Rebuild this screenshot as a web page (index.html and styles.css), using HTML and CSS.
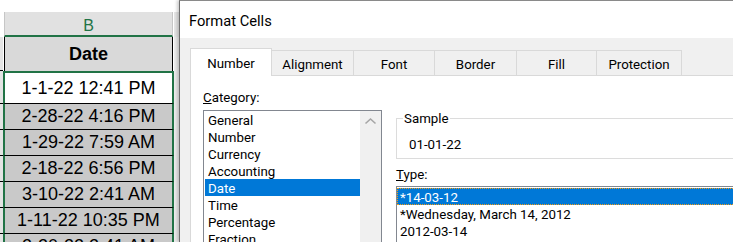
FILE: index.html
```html
<!DOCTYPE html>
<html lang="en">

<head>
    <meta charset="UTF-8">
    <meta name="viewport" content="width=device-width, initial-scale=1.0">
    <title>Format Cells - Date</title>
    <link rel="stylesheet" href="styles.css">
</head>

<body>
    <div class="sheet">
        <div class="row row-colhead"><div class="a"></div><div class="b">B</div><div class="c"></div></div>
        <div class="row row-title"><div class="a"></div><div class="b">Date</div><div class="c"></div></div>
        <div class="row row-first"><div class="a"></div><div class="b">1-1-22 12:41 PM</div><div class="c"></div></div>
        <div class="row row-sel"><div class="a"></div><div class="b">2-28-22 4:16 PM</div><div class="c"></div></div>
        <div class="row row-sel"><div class="a"></div><div class="b">1-29-22 7:59 AM</div><div class="c"></div></div>
        <div class="row row-sel"><div class="a"></div><div class="b">2-18-22 6:56 PM</div><div class="c"></div></div>
        <div class="row row-sel"><div class="a"></div><div class="b">3-10-22 2:41 AM</div><div class="c"></div></div>
        <div class="row row-sel"><div class="a"></div><div class="b">1-11-22 10:35 PM</div><div class="c"></div></div>
        <div class="row row-sel"><div class="a"></div><div class="b">2-20-22 2:41 AM</div><div class="c"></div></div>
    </div>

    <div class="dialog">
        <div class="title">Format Cells</div>
        <div class="tabs">
            <div class="tab active" style="width: 82px">Number</div>
            <div class="tab" style="width: 82px">Alignment</div>
            <div class="tab" style="width: 81px">Font</div>
            <div class="tab" style="width: 82px">Border</div>
            <div class="tab" style="width: 80px">Fill</div>
            <div class="tab" style="width: 85px">Protection</div>
        </div>
        <div class="panel">
            <div class="left-col">
                <div class="label"><u>C</u>ategory:</div>
                <div class="listbox category">
                    <div class="items">
                        <div class="item">General</div>
                        <div class="item">Number</div>
                        <div class="item">Currency</div>
                        <div class="item">Accounting</div>
                        <div class="item selected">Date</div>
                        <div class="item">Time</div>
                        <div class="item">Percentage</div>
                        <div class="item">Fraction</div>
                        <div class="item">Scientific</div>
                        <div class="item">Text</div>
                    </div>
                    <div class="scrollbar">
                        <svg width="21" height="18" viewBox="0 0 21 18">
                            <path d="M5.5 12.5 L10.5 8 L15.5 12.5" fill="none" stroke="#a6a6a6" stroke-width="1.6"/>
                        </svg>
                    </div>
                </div>
            </div>
            <div class="right-col">
                <fieldset class="sample">
                    <legend>Sample</legend>
                    <div class="sample-value">01-01-22</div>
                </fieldset>
                <div class="label type-label"><u>T</u>ype:</div>
                <div class="listbox type">
                    <div class="item selected focused">*14-03-12</div>
                    <div class="item">*Wednesday, March 14, 2012</div>
                    <div class="item">2012-03-14</div>
                    <div class="item">14-03-12</div>
                    <div class="item">14-03-12 1:30 PM</div>
                </div>
            </div>
        </div>
    </div>
</body>

</html>
```
FILE: styles.css
```css
html,
body {
    margin: 0;
    overflow: hidden;
}

body {
    display: flex;
    width: 733px;
    height: 242px;
    background-color: #fff;
}

/* spreadsheet */

.sheet {
    width: 179px;
    flex: none;
    padding-top: 12px;
    font-family: "Liberation Sans", Arial, sans-serif;
    font-size: 18px;
    color: #000;
}

.row {
    display: flex;
    box-sizing: border-box;
}

.a {
    width: 3px;
    background-color: #e4e4e4;
    border-bottom: 1px solid #000;
    box-sizing: border-box;
}

.b {
    width: 171px;
    box-sizing: border-box;
    display: flex;
    align-items: center;
    justify-content: center;
    white-space: nowrap;
}

.c {
    flex: 1;
    background-color: #ececec;
}

.row-colhead {
    height: 25px;
}

.row-colhead .a {
    background-color: #fff;
    border-bottom: none;
}

.row-colhead .b {
    width: 169px;
    margin: 0 1px;
    padding-top: 5px;
    background-color: #e1e1e1;
    border-left: 1px solid #c6c6c6;
    border-right: 1px solid #c6c6c6;
    border-bottom: 2px solid #217346;
    color: #217346;
    font-size: 16px;
}

.row-colhead .c {
    background-color: #e6e6e6;
}

.row-title {
    height: 34px;
}

.row-title .b {
    width: 169px;
    margin: 0 1px;
    background-color: #d9d9d9;
    border-left: 1px solid #000;
    border-right: 1px solid #000;
    font-weight: bold;
}

.row-first {
    height: 33px;
}

.row-first .b {
    background-color: #fff;
    border: 2px solid #217346;
    border-bottom: 1px solid #000;
}

.row-sel {
    height: 26px;
}

.row-sel .b {
    background-color: #c9c9c9;
    border-left: 2px solid #217346;
    border-right: 2px solid #217346;
    border-bottom: 1px solid #000;
}

/* dialog */

.dialog {
    width: 720px;
    flex: none;
    border-left: 1px solid #6e6e6e;
    border-top: 1px solid #8a8a8a;
    background-color: #f0f0f0;
    box-shadow: -2px 0 3px rgba(0, 0, 0, 0.2);
    font-family: Roboto, "Noto Sans", sans-serif;
    font-size: 13.3px;
    color: #000;
}

.title {
    height: 37px;
    padding-left: 9px;
    background-color: #fff;
    font-size: 14.7px;
    line-height: 40px;
}

.tabs {
    display: flex;
    align-items: flex-end;
    margin-top: 10px;
    padding-left: 10px;
}

.tab {
    box-sizing: border-box;
    height: 25px;
    padding-top: 3px;
    line-height: 21px;
    text-align: center;
    border-top: 1px solid #d9d9d9;
    border-right: 1px solid #d9d9d9;
    background-color: #f0f0f0;
}

.tab.active {
    height: 28px;
    padding-top: 4px;
    margin-bottom: -1px;
    border-left: 1px solid #d9d9d9;
    background-color: #fff;
    position: relative;
    z-index: 1;
}

.panel {
    display: flex;
    align-items: flex-start;
    height: 200px;
    margin-left: 10px;
    padding-left: 12px;
    background-color: #fff;
    border-top: 1px solid #d9d9d9;
    border-left: 1px solid #d9d9d9;
}

.left-col {
    width: 179px;
    flex: none;
}

.label {
    line-height: 17px;
}

.left-col .label {
    margin-top: 13px;
    margin-bottom: 4px;
}

.listbox {
    box-sizing: border-box;
    border: 1px solid #828790;
    background-color: #fff;
}

.category {
    display: flex;
    height: 160px;
    padding-left: 1px;
}

.category .items {
    flex: 1;
}

.item {
    height: 17px;
    line-height: 19px;
    padding-left: 3px;
    white-space: nowrap;
}

.item.selected {
    background-color: #0078d7;
    color: #fff;
}

.item.focused {
    box-sizing: border-box;
    padding-left: 2px;
    border: 1px dotted #f39c12;
    line-height: 17px;
}

.scrollbar {
    width: 21px;
    flex: none;
    background-color: #f0f0f0;
}

.scrollbar svg {
    display: block;
}

.right-col {
    flex: 1;
    margin-left: 14px;
}

.sample {
    margin: 34px 0 0 0;
    padding: 9px 6px 5px;
    border: 1px solid #dcdcdc;
}

.sample legend {
    padding: 0 1px;
    line-height: 17px;
}

.sample-value {
    margin-left: 6px;
    line-height: 17px;
}

.type-label {
    margin-top: 7px;
    margin-bottom: 3px;
}

.type {
    height: 80px;
    padding-top: 1px;
}
```
